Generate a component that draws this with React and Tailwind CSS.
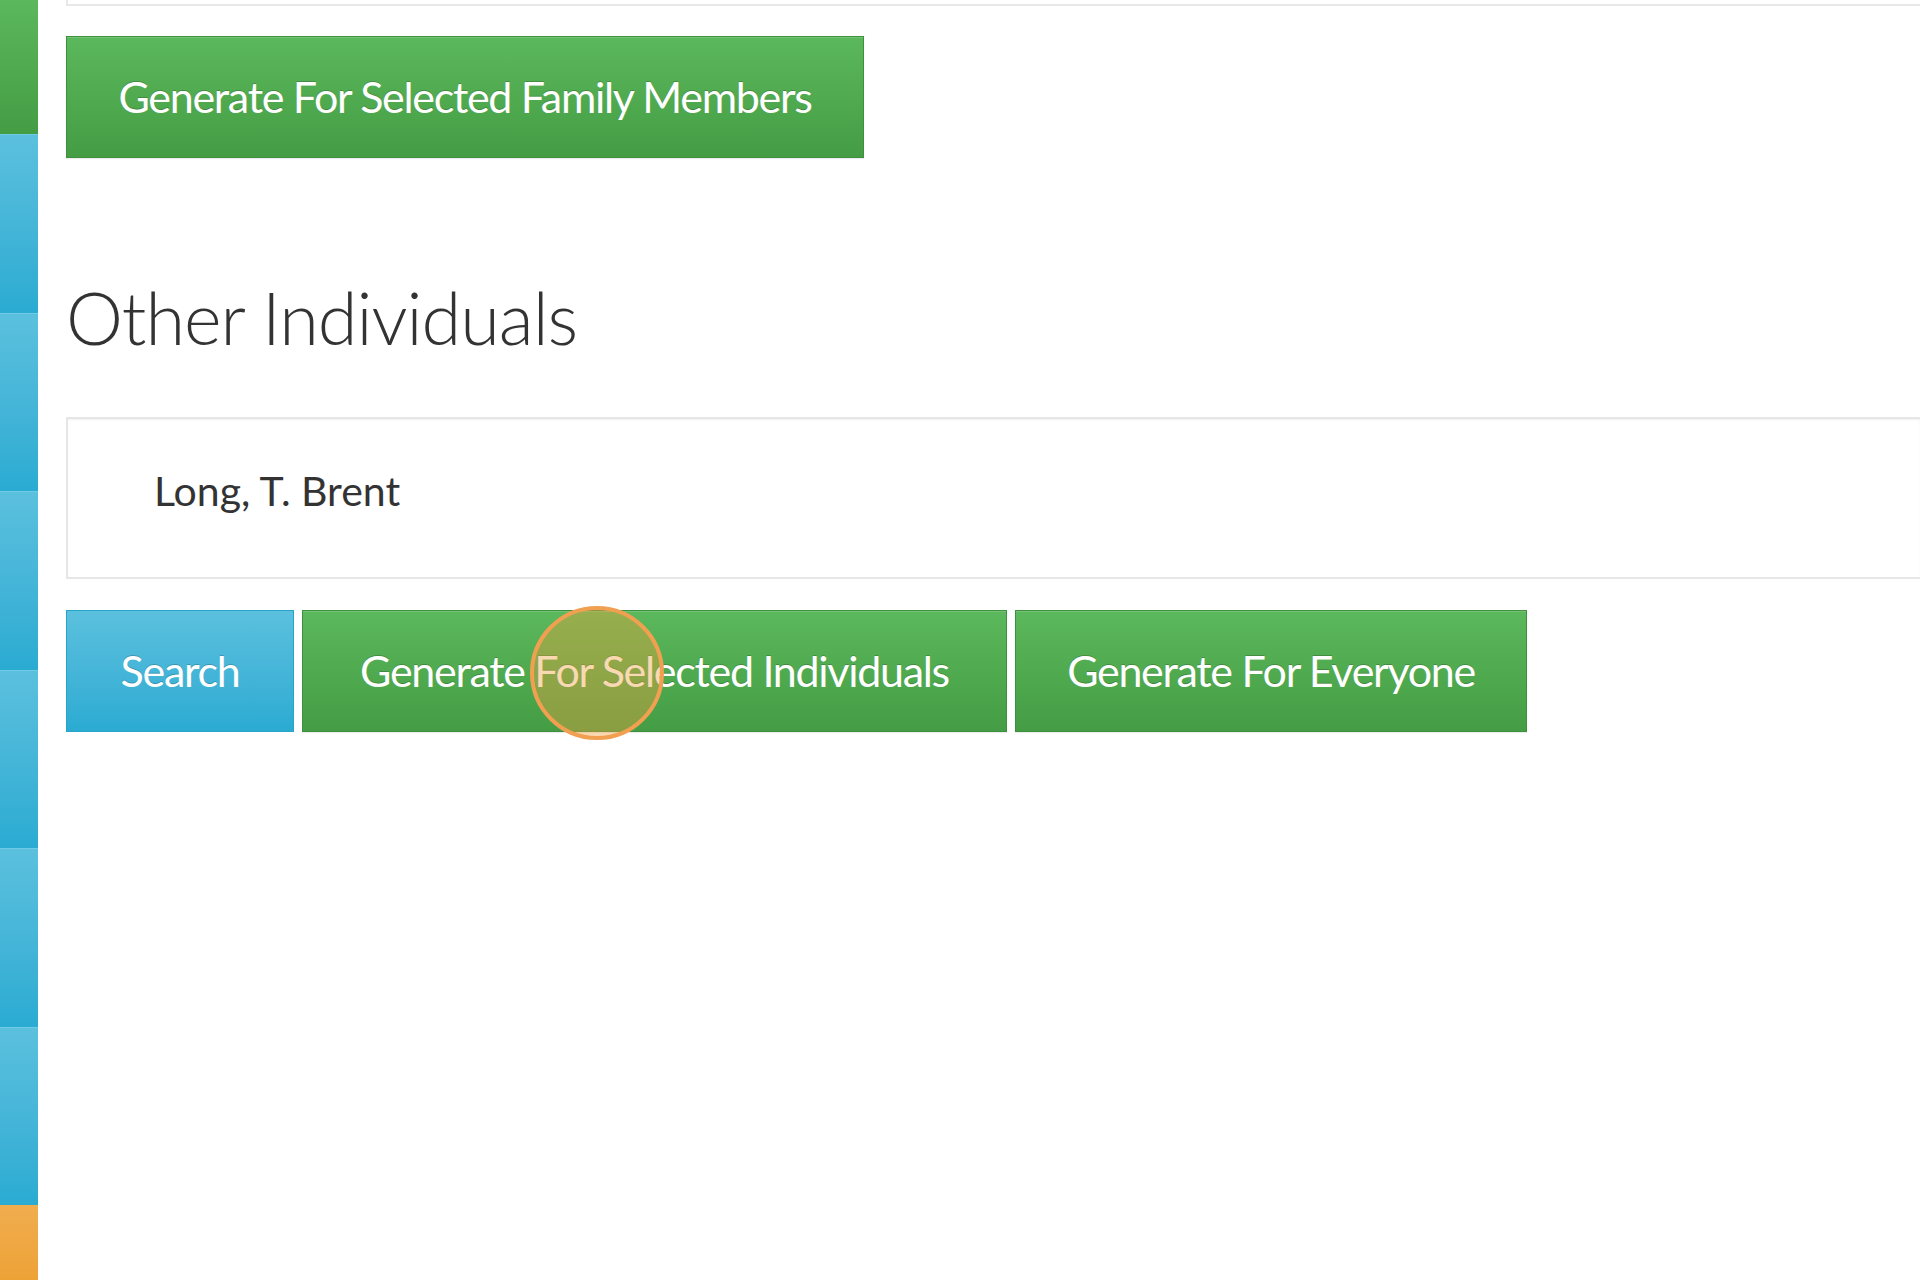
import React from 'react';

const font = { fontFamily: 'Lato, "Open Sans", sans-serif' };

const greenBtn =
  'flex items-center justify-center h-[122px] text-[43px] tracking-[-1.3px] text-white bg-gradient-to-b from-[#5cb85c] to-[#449d44] border border-[#3e8f3e] [text-shadow:0_-1px_0_rgba(0,0,0,0.2)] shadow-[inset_0_1px_0_rgba(255,255,255,0.15),0_1px_1px_rgba(0,0,0,0.075)]';

export default function App() {
  return (
    <div className="flex min-h-screen bg-white" style={font}>
      {/* Left colour strip */}
      <aside className="w-[38px] shrink-0 flex flex-col">
        <div className="h-[134px] bg-gradient-to-b from-[#5cb85c] to-[#449d44]" />
        {[0, 1, 2, 3, 4, 5].map((i) => (
          <div key={i} className="h-[178.5px] bg-gradient-to-b from-[#5bc0de] to-[#2aabd2] border-t border-[#6fcbe6]" />
        ))}
        <div className="flex-1 bg-gradient-to-b from-[#f0ad4e] to-[#eea236]" />
      </aside>

      {/* Main content */}
      <main className="flex-1 min-w-0 pl-[28px]">
        <div className="h-[6px] border-l-2 border-b-2 border-[#e8e8e8]" />

        <div className="mt-[30px] flex">
          <button className={`${greenBtn} w-[798px]`}>Generate For Selected Family Members</button>
        </div>

        <h2 className="mt-[123px] text-[72px] leading-none font-light tracking-[-1px] text-[#333]">Other Individuals</h2>

        <div className="mt-[64px] h-[162px] border-2 border-r-0 border-[#e6e6e6] shadow-[inset_0_1px_2px_rgba(0,0,0,0.06)] flex items-center pl-[86px] pb-[14px]">
          <span className="text-[41px] text-[#333]">Long, T. Brent</span>
        </div>

        <div className="mt-[31px] flex gap-[8px] relative">
          <button className="flex items-center justify-center w-[228px] h-[122px] text-[43px] tracking-[-1.3px] text-white bg-gradient-to-b from-[#5bc0de] to-[#2aabd2] border border-[#28a4c9] [text-shadow:0_-1px_0_rgba(0,0,0,0.2)]">
            Search
          </button>
          <button className={`${greenBtn} w-[705px]`}>Generate For Selected Individuals</button>
          <button className={`${greenBtn} w-[512px]`}>Generate For Everyone</button>

          {/* click indicator */}
          <div className="absolute left-[464px] top-[-4px] w-[134px] h-[134px] rounded-full border-[4px] border-[#f0a050] bg-[rgba(240,160,60,0.4)] pointer-events-none" />
        </div>
      </main>
    </div>
  );
}
